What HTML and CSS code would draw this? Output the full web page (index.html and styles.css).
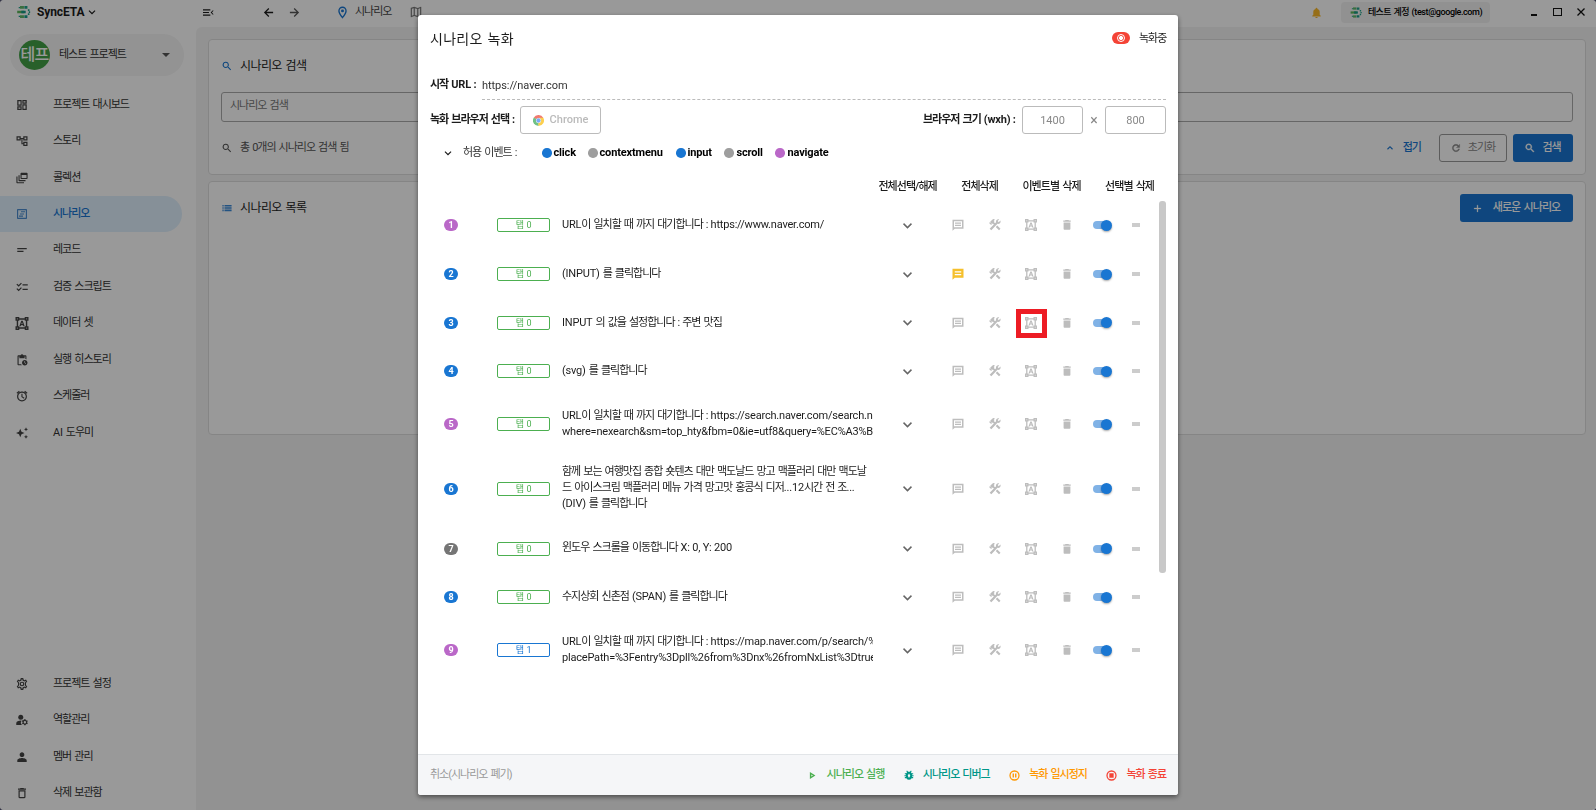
FILE: index.html
```html
<!DOCTYPE html>
<html lang="ko">
<head>
<meta charset="utf-8">
<title>SyncETA</title>
<link rel="stylesheet" href="styles.css">
</head>
<body>
<svg class="defs" aria-hidden="true">
  <symbol id="i-logo" viewBox="0 0 16 16"><path d="M4 1.200h4.500v3H4z" fill="#5fb868"/><path d="M9 1.200h3.500v3H9zM2.500 2.200H4v1.500H2.500z" fill="#1fa38a"/><path d="M.8 6.500h8v3H.8z" fill="#5cb85c"/><path d="M5.500 6.500h5v3h-5z" fill="#179a86"/><path d="M4 11.800h4.500v3H4z" fill="#5fb868"/><path d="M9 11.800h3.500v3H9zM2.500 12.300H4v1.500H2.500z" fill="#149c8c"/><path d="M13 4.800h1.800v2H13zM14 7.200h1.600v1.800H14zM13 9.500h1.800v2H13z" fill="#1fa38a"/></symbol>
  <symbol id="i-down" viewBox="0 0 24 24"><path d="M5.600 7.600 12 14l6.400-6.400L20.300 9.500 12 17.800 3.700 9.500z"/></symbol>
  <symbol id="i-up" viewBox="0 0 24 24"><path d="M12 7l-7 7 1.900 1.900L12 10.800l5.100 5.100L19 14z"/></symbol>
  <symbol id="i-menu" viewBox="0 0 24 24"><path d="M0 19h16v-2.500H0V19zm0-5.700h13v-2.500H0v2.500zM0 5v2.600h16V5zm23 10.590L19.420 12 23 8.410 21.590 7l-5 5 5 5L23 15.590z"/></symbol>
  <symbol id="i-back" viewBox="0 0 24 24"><path d="M20.500 10.700H8.200l5.200-5.200L11.800 3.800 3.500 12l8.300 8.200 1.600-1.700-5.200-5.200h12.300z"/></symbol>
  <symbol id="i-fwd" viewBox="0 0 24 24"><path d="M3.500 10.700h12.300l-5.200-5.200 1.600-1.700 8.300 8.200-8.300 8.200-1.600-1.700 5.200-5.200H3.500z"/></symbol>
  <symbol id="i-pin" viewBox="0 0 24 24"><path fill-rule="evenodd" d="M12 1C7.600 1 4.200 4.600 4.200 9c0 5.500 7.800 14 7.800 14s7.800-8.500 7.800-14c0-4.400-3.400-8-7.800-8zm0 2.500A5.400 5.400 0 0117.300 9c0 3-3 7.300-5.300 10.200C9.700 16.300 6.700 12 6.700 9A5.400 5.400 0 0112 3.500z"/><circle cx="12" cy="9" r="2.700"/></symbol>
  <symbol id="i-map" viewBox="0 0 24 24"><path d="M20.500 3l-.16.030L15 5.100 9 3 3.360 4.900c-.21.070-.36.250-.36.480V20.500c0 .28.220.5.500.5l.16-.03L9 18.900l6 2.100 5.640-1.900c.21-.07.36-.25.360-.48V3.500c0-.28-.22-.5-.5-.5zM10 5.470l4 1.400v11.660l-4-1.400V5.470zm-5 .99l3-1.010v11.700l-3 1.160V6.460zm14 11.080l-3 1.010V6.860l3-1.160v11.840z"/></symbol>
  <symbol id="i-bell" viewBox="0 0 24 24"><path d="M12 24c1.500 0 2.600-1 2.600-2.200H9.400C9.400 23 10.500 24 12 24zm7-7v-6c0-3.500-1.800-6-5-6.800V3.500c0-1-.9-1.800-2-1.800s-2 .8-2 1.800v.7C6.800 5 5 7.500 5 11v6l-2.200 2v1.500h18.400V19L19 17z"/></symbol>
  <symbol id="i-dash" viewBox="0 0 24 24"><path d="M19 4.500V7h-4V4.500h4M9 4.500V11H5V4.500h4M19 13v6.500h-4V13h4M9 17v2.500H5V17h4M21.500 2H12.700v7.500h8.800V2zM11.300 2H2.500v11.500h8.800V2zm10.200 8.500h-8.800V22h8.800V10.500zm-10.200 4H2.500V22h8.800v-7.500z"/></symbol>
  <symbol id="i-tree" viewBox="0 0 24 24"><path d="M23 11V2.500h-8.500V6H9.500V2.500H1V11h8.500V8h1.300v10.500h3.700V22H23v-8.500h-8.500v3H13V8h1.500v3H23zM7 8.700H3.400V5H7v3.700zm10 7.200h3.600v3.700H17v-3.700zM17 5h3.600v3.700H17V5z"/></symbol>
  <symbol id="i-coll" viewBox="0 0 24 24"><path d="M3 9H.8v11.500c0 1.100.9 2 2 2H16V20.300H3V9z"/><path d="M7.200 6.500H5v9.800c0 1.100.9 2 2 2h12v-2.200H7.200V6.500z"/><path fill-rule="evenodd" d="M21 1.500H11c-1.100 0-2 .9-2 2v8.700c0 1.100.9 2 2 2h10.200c1.100 0 2-.9 2-2V3.500c0-1.100-.9-2-2.200-2zm0 10.500h-9.800V6H21v6z"/></symbol>
  <symbol id="i-scen" viewBox="0 0 24 24"><path fill-rule="evenodd" d="M20 2H4c-1.100 0-2 .9-2 2v16c0 1.100.9 2 2 2h16c1.100 0 2-.9 2-2V4c0-1.100-.9-2-2-2zm-.3 17.700H4.300V4.300h15.400v15.400z"/><path d="M10 6.500h8v2.200h-8zM8 10.800h8V13H8zM6 15.200h8v2.200H6z"/></symbol>
  <symbol id="i-rec" viewBox="0 0 24 24"><path d="M2.500 8h19v2.600h-19V8zm0 5.500h12.500v2.600H2.500v-2.600z"/></symbol>
  <symbol id="i-check" viewBox="0 0 24 24"><path d="M23.500 6.500H13v2.400h10.500V6.500zm0 9H13v2.400h10.500v-2.400zM5.400 11.500L.8 7l1.700-1.700 2.900 2.900 4.600-4.700 1.700 1.700L5.400 11.500zm0 9L.8 16l1.700-1.700 2.900 2.900 4.600-4.700 1.700 1.700-6.300 6.300z"/></symbol>
  <symbol id="i-data" viewBox="0 0 24 24"><path fill-rule="evenodd" d="M0 0h7v2.300h10V0h7v7h-2.300v10H24v7h-7v-2.300H7V24H0v-7h2.300V7H0V0zm4.900 7v10H7v2.100h10V17h2.100V7H17V4.900H7V7z"/><path d="M10.700 6.800h2.600L17 17.200h-2.500l-.7-2.200h-3.600l-.7 2.200H7zm1.300 3L10.900 13h2.200z"/><path class="hole" d="M2.500 2.500h2v2h-2zM19.500 2.500h2v2h-2zM2.500 19.500h2v2h-2zM19.500 19.500h2v2h-2z"/></symbol>
  <symbol id="i-hist" viewBox="0 0 24 24"><path d="M17.500 12c-3 0-5.500 2.400-5.500 5.500s2.500 5.500 5.500 5.500 5.500-2.500 5.500-5.500-2.500-5.500-5.500-5.500zm1.600 8l-2.200-2.300V14h1.200v3.100l1.900 2-.9.900zM18.500 2.500h-3.500C14.400 1.300 13.300.5 12 .5s-2.400.8-3 2H5.200c-1.300 0-2.200.9-2.200 2V20.500c0 1.100.9 2.200 2.200 2.200h6.500c-.6-.7-1-1.500-1.300-2.300H5.300V4.800h1.500v3.500h10.400V4.800h1.500v5.400c.8.1 1.500.3 2.200.7V4.500c0-1.100-1-2-2.400-2z"/></symbol>
  <symbol id="i-alarm" viewBox="0 0 24 24"><path d="M23 5.700l-5-4.200-1.500 1.800 5 4.200L23 5.700zM7.500 3.300L6 1.500 1 5.700l1.500 1.800 5-4.200zM13 7.500h-2.200v6.700l5.100 3.100 1-1.700-3.900-2.400V7.500zM12 3c-5.500 0-9.900 4.400-9.900 9.900S6.500 22.800 12 22.800s9.900-4.400 9.900-9.900S17.500 3 12 3zm0 17.400c-4.200 0-7.500-3.300-7.500-7.500S7.800 5.400 12 5.400s7.500 3.300 7.500 7.500-3.300 7.500-7.500 7.500z"/></symbol>
  <symbol id="i-ai" viewBox="0 0 24 24"><path d="M20 8.500l1.250-2.750L24 4.500l-2.750-1.250L20 .5l-1.250 2.750L16 4.500l2.750 1.250zM20 15.500l-1.250 2.750L16 19.500l2.750 1.250L20 23.500l1.250-2.750L24 19.500l-2.750-1.250zM11 9.500L8.500 3.500 6 9.500 0 12l6 2.500 2.500 6 2.500-6 6-2.500z"/></symbol>
  <symbol id="i-gear" viewBox="0 0 24 24"><path fill-rule="evenodd" d="M9.500 0h5l.6 3.200 1.800 1.100 3.100-1.100 2.500 4.300-2.500 2.200v4.600l2.500 2.200-2.500 4.300-3.100-1.100-1.800 1.100-.6 3.200h-5l-.6-3.200-1.800-1.100L4 20.800l-2.500-4.300L4 14.300V9.700L1.500 7.500 4 3.200l3.100 1.100 1.800-1.100zm1.900 2.400L11 5 7.400 7 5 6.200l-.7 1.200 2 1.700v5.800l-2 1.700.7 1.200L7.400 17l3.600 2 .4 2.600h1.200L13 19l3.600-2 2.400.8.700-1.200-2-1.700V9.100l2-1.700-.7-1.200-2.400.8L13 5l-.4-2.600z"/><path fill-rule="evenodd" d="M12 7.300a4.700 4.700 0 100 9.400 4.700 4.700 0 000-9.400zm0 7a2.300 2.300 0 110-4.600 2.300 2.300 0 010 4.600z"/></symbol>
  <symbol id="i-role" viewBox="0 0 24 24"><circle cx="9.500" cy="6.500" r="5"/><path d="M10.600 13C4.500 13 .5 15.200.5 18.500V22h11.200A8 8 0 0110.600 13z"/><path fill-rule="evenodd" d="M16.500 10.500h2.600l.4 1.500 1.300.8 1.500-.5 1.300 2.200-1.100 1.100v1.800l1.100 1.100-1.300 2.200-1.500-.5-1.300.8-.4 1.500h-2.600l-.4-1.500-1.300-.8-1.500.5-1.300-2.200 1.100-1.100v-1.800L11 14.500l1.300-2.200 1.500.5 1.300-.8zm1.300 3.600a2.400 2.400 0 100 4.800 2.400 2.400 0 000-4.800z"/></symbol>
  <symbol id="i-user" viewBox="0 0 24 24"><path d="M12 12c2.600 0 4.700-2.100 4.700-4.700S14.600 2.600 12 2.600 7.300 4.700 7.300 7.300 9.400 12 12 12zm0 2.200c-3.200 0-9.400 1.500-9.400 4.700V22h18.800v-3.100c0-3.200-6.200-4.700-9.400-4.700z"/></symbol>
  <symbol id="i-trash-o" viewBox="0 0 24 24"><path fill-rule="evenodd" d="M5 20c0 1.300 1 2.300 2.300 2.300h9.400c1.300 0 2.300-1 2.300-2.300V6.500H5V20zM7.400 8.800h9.200v11H7.400v-11zM16 3l-1.100-1.200H9.100L8 3H4v2.300h16V3z"/></symbol>
  <symbol id="i-trash" viewBox="0 0 24 24"><path d="M5.200 19.500c0 1.200 1 2.200 2.200 2.200h9.200c1.200 0 2.200-1 2.200-2.200V7H5.200v12.500zM16 3l-1.100-1.200H9.100L8 3H4.500v2.700h15V3z"/></symbol>
  <symbol id="i-search" viewBox="0 0 24 24"><path fill-rule="evenodd" d="M16 14.300h-.9l-.3-.3A7.500 7.500 0 109 16.800c1.900 0 3.600-.7 4.900-1.800l.3.300v.9l5.800 5.700 1.800-1.800zm-7 0A5 5 0 119 4.300a5 5 0 010 10z"/></symbol>
  <symbol id="i-list" viewBox="0 0 24 24"><path d="M1 4.500h3V8.500H1zM1 10h3v4H1zM1 15.500h3v4H1zM6 4.500h17v4H6zM6 10h17v4H6zM6 15.500h17v4H6z" opacity=".85"/></symbol>
  <symbol id="i-refresh" viewBox="0 0 24 24"><path d="M18.200 5.800C16.600 4.200 14.500 3.200 12 3.200c-4.900 0-8.800 3.900-8.800 8.800s3.900 8.800 8.800 8.800c4.100 0 7.500-2.800 8.500-6.600h-2.800c-.9 2.400-3.100 4.100-5.700 4.100-3.500 0-6.300-2.800-6.300-6.300S8.500 5.700 12 5.700c1.700 0 3.300.7 4.400 1.900L13 11h7.800V3.200l-2.600 2.600z"/></symbol>
  <symbol id="i-plus" viewBox="0 0 24 24"><path d="M21 13.200h-7.800V21h-2.400v-7.800H3v-2.400h7.800V3h2.400v7.800H21z"/></symbol>
  <symbol id="i-msg" viewBox="0 0 24 24"><path fill-rule="evenodd" d="M1 1.500h22v18H5.500L1 23.500zM4 4.500v12h16v-12zM6 7h12v2.300H6zM6 11.500h12v2.300H6z"/></symbol>
  <symbol id="i-msg-f" viewBox="0 0 24 24"><path fill-rule="evenodd" d="M1 1.500h22v18H5.500L1 23.500zM5.500 6.500V9h13V6.500zM5.500 12v2.500h13V12z"/></symbol>
  <symbol id="i-tools" viewBox="0 0 24 24"><path d="M13.500 16l6.500 6.500 3-3-6.500-6.500zM18.500 9.800c2.600 0 4.700-2.100 4.700-4.700 0-.7-.2-1.300-.4-1.900l-3.300 3.300-2.300-2.300L20.500 1c-.6-.3-1.300-.4-2-.4-2.600 0-4.600 2.100-4.600 4.600 0 .5.1.9.2 1.300l-2 2-2-2 .8-.9-1.600-1.700L11.800 1.400a3.800 3.800 0 00-5.300 0L2.400 5.500 4 7.100H.9L.1 8l4.200 4.200.9-.9V8.200l1.600 1.700.9-.9 1.900 2L1.300 19.300l3.400 3.400L17 9.500c.5.200 1 .3 1.500.3z"/></symbol>
  <symbol id="i-play" viewBox="0 0 24 24"><path fill-rule="evenodd" d="M3 0v24l19-12zm5 8.500L13.500 12 8 15.500z"/></symbol>
  <symbol id="i-bug" viewBox="0 0 24 24"><path fill-rule="evenodd" d="M22 7.500h-3.500l-2-2.300L18.500 3 16.800 1.300l-2.900 2.600h-3.800L7.200 1.300 5.500 3l2 2.200-2 2.300H2V10h2.500v2.500H1v2.600h3.500V17H2v2.500h3.700A7.200 7.200 0 0012 23.500a7.200 7.200 0 006.300-4H22V17h-2.500v-1.900H23v-2.600h-3.500V10H22zM12 8.500l3 4.700-2 5h-2l-2-5z"/></symbol>
  <symbol id="i-pause" viewBox="0 0 24 24"><path fill-rule="evenodd" d="M12 .8a11.200 11.200 0 100 22.400A11.200 11.200 0 0012 .8zm0 2.800a8.400 8.400 0 110 16.800 8.400 8.400 0 010-16.800zM7.800 7.500v9h3v-9zm5.400 0v9h3v-9z"/></symbol>
  <symbol id="i-stop" viewBox="0 0 24 24"><path fill-rule="evenodd" d="M12 .8a11.200 11.200 0 100 22.400A11.200 11.200 0 0012 .8zm0 2.800a8.400 8.400 0 110 16.800 8.400 8.400 0 010-16.800zM7.300 7.300v9.400h9.400V7.300z"/></symbol>
  <symbol id="i-chrome" viewBox="0 0 24 24"><path fill="#ea4335" d="M12 12L1.600 6A12 12 0 0122.400 6z"/><path fill="#fbbc05" d="M12 12V6h10.400A12 12 0 0112 24z"/><path fill="#34a853" d="M12 12v12A12 12 0 011.600 6z"/><path fill="#34a853" d="M6.800 15L1.600 6l10.400 6z"/><path fill="#fbbc05" d="M17.200 15L12 24V12l5-4z"/><circle cx="12" cy="12" r="5.500" fill="#fff"/><circle cx="12" cy="12" r="4.700" fill="#4285f4"/></symbol>
</svg>

<div class="app">
  <header class="topbar">
    <svg class="ic logo"><use href="#i-logo"/></svg>
    <span class="brand">SyncETA</span>
    <svg class="ic brand-down"><use href="#i-down"/></svg>
    <svg class="ic menu"><use href="#i-menu"/></svg>
    <svg class="ic back"><use href="#i-back"/></svg>
    <svg class="ic fwd"><use href="#i-fwd"/></svg>
    <svg class="ic pin"><use href="#i-pin"/></svg>
    <span class="crumb">시나리오</span>
    <svg class="ic map"><use href="#i-map"/></svg>
    <svg class="ic bell"><use href="#i-bell"/></svg>
    <div class="account"><svg class="ic"><use href="#i-logo"/></svg><span>테스트 계정 <b class="en">(test@google.com)</b></span></div>
    <div class="win"><i class="min"></i><i class="max"></i><svg class="close" viewBox="0 0 10 10"><path d="M1.500 1.500l7 7M8.500 1.500l-7 7"/></svg></div>
  </header>
  <div class="body">
    <aside class="side">
      <div class="project"><span class="avatar">테프</span><span class="pname">테스트 프로젝트</span><i class="caret"></i></div>
      <nav class="nav">
        <a><svg><use href="#i-dash"/></svg>프로젝트 대시보드</a>
        <a><svg><use href="#i-tree"/></svg>스토리</a>
        <a><svg><use href="#i-coll"/></svg>콜렉션</a>
        <a class="on"><svg><use href="#i-scen"/></svg>시나리오</a>
        <a><svg><use href="#i-rec"/></svg>레코드</a>
        <a><svg><use href="#i-check"/></svg>검증 스크립트</a>
        <a><svg class="wide"><use href="#i-data"/></svg>데이터 셋</a>
        <a><svg><use href="#i-hist"/></svg>실행 히스토리</a>
        <a><svg><use href="#i-alarm"/></svg>스케줄러</a>
        <a><svg><use href="#i-ai"/></svg><span><span class="en">AI</span> 도우미</span></a>
      </nav>
      <nav class="nav foot">
        <a><svg><use href="#i-gear"/></svg>프로젝트 설정</a>
        <a><svg><use href="#i-role"/></svg>역할관리</a>
        <a><svg><use href="#i-user"/></svg>멤버 관리</a>
        <a><svg><use href="#i-trash-o"/></svg>삭제 보관함</a>
      </nav>
    </aside>
    <main class="content">
      <section class="card find">
        <h2><svg><use href="#i-search"/></svg>시나리오 검색</h2>
        <div class="field">시나리오 검색</div>
        <div class="result">
          <span class="count"><svg><use href="#i-search"/></svg>총 0개의 시나리오 검색 됨</span>
          <span class="fold"><svg><use href="#i-up"/></svg>접기</span>
          <span class="btn ghost"><svg><use href="#i-refresh"/></svg>초기화</span>
          <span class="btn go"><svg><use href="#i-search"/></svg>검색</span>
        </div>
      </section>
      <section class="card list">
        <h2><svg><use href="#i-list"/></svg>시나리오 목록</h2>
        <span class="btn new"><svg><use href="#i-plus"/></svg>새로운 시나리오</span>
      </section>
    </main>
  </div>
</div>

<div class="overlay">
  <div class="modal">
    <header class="mhead"><h1>시나리오 녹화</h1><span class="recbadge"><i></i></span><span class="recording">녹화중</span></header>
    <div class="url"><b>시작 <span class="en">URL :</span></b><div class="urlbox">https://naver.com</div></div>
    <div class="opts"><b>녹화 브라우저 선택 :</b><div class="chrome"><svg><use href="#i-chrome"/></svg>Chrome</div>
      <b class="size">브라우저 크기 <span class="en">(wxh) :</span></b><div class="num">1400</div><span class="x">×</span><div class="num">800</div></div>
    <div class="events"><svg><use href="#i-down"/></svg><span class="allow">허용 이벤트 :</span>
      <span class="ev click">click</span><span class="ev context">contextmenu</span><span class="ev input">input</span><span class="ev scroll">scroll</span><span class="ev navi">navigate</span></div>
    <div class="bulk"><span>전체선택/해제</span><span>전체삭제</span><span>이벤트별 삭제</span><span>선택별 삭제</span></div>

    <div class="steps">
      <div class="rows">
        <div class="row"><span class="no nv">1</span><span class="tag">탭 0</span><p><span class="en">URL</span>이 일치할 때 까지 대기합니다 : <span class="en">https://www.naver.com/</span></p><svg class="dn"><use href="#i-down"/></svg><svg><use href="#i-msg"/></svg><svg><use href="#i-tools"/></svg><svg><use href="#i-data"/></svg><svg><use href="#i-trash"/></svg><i class="sw"></i><i class="dash"></i></div>
        <div class="row"><span class="no">2</span><span class="tag">탭 0</span><p><span class="en">(INPUT)</span> 를 클릭합니다</p><svg class="dn"><use href="#i-down"/></svg><svg class="note"><use href="#i-msg-f"/></svg><svg><use href="#i-tools"/></svg><svg><use href="#i-data"/></svg><svg><use href="#i-trash"/></svg><i class="sw"></i><i class="dash"></i></div>
        <div class="row"><span class="no">3</span><span class="tag">탭 0</span><p><span class="en">INPUT</span> 의 값을 설정합니다 : 주변 맛집</p><svg class="dn"><use href="#i-down"/></svg><svg><use href="#i-msg"/></svg><svg><use href="#i-tools"/></svg><span class="marked"><svg><use href="#i-data"/></svg></span><svg><use href="#i-trash"/></svg><i class="sw"></i><i class="dash"></i></div>
        <div class="row"><span class="no">4</span><span class="tag">탭 0</span><p><span class="en">(svg)</span> 를 클릭합니다</p><svg class="dn"><use href="#i-down"/></svg><svg><use href="#i-msg"/></svg><svg><use href="#i-tools"/></svg><svg><use href="#i-data"/></svg><svg><use href="#i-trash"/></svg><i class="sw"></i><i class="dash"></i></div>
        <div class="row two"><span class="no nv">5</span><span class="tag">탭 0</span><p><span class="en">URL</span>이 일치할 때 까지 대기합니다 : <span class="en">https://search.naver.com/search.n</span><br><span class="en">where=nexearch&amp;sm=top_hty&amp;fbm=0&amp;ie=utf8&amp;query=%EC%A3%B</span></p><svg class="dn"><use href="#i-down"/></svg><svg><use href="#i-msg"/></svg><svg><use href="#i-tools"/></svg><svg><use href="#i-data"/></svg><svg><use href="#i-trash"/></svg><i class="sw"></i><i class="dash"></i></div>
        <div class="row three"><span class="no">6</span><span class="tag">탭 0</span><p>함께 보는 여행맛집 종합 숏텐츠 대만 맥도날드 망고 맥플러리 대만 맥도날<br>드 아이스크림 맥플러리 메뉴 가격 망고맛 홍콩식 디저<span class="en">...12</span>시간 전 조<span class="en">...</span><br><span class="en">(DIV)</span> 를 클릭합니다</p><svg class="dn"><use href="#i-down"/></svg><svg><use href="#i-msg"/></svg><svg><use href="#i-tools"/></svg><svg><use href="#i-data"/></svg><svg><use href="#i-trash"/></svg><i class="sw"></i><i class="dash"></i></div>
        <div class="row"><span class="no sc">7</span><span class="tag">탭 0</span><p>윈도우 스크롤을 이동합니다 <span class="en">X: 0, Y: 200</span></p><svg class="dn"><use href="#i-down"/></svg><svg><use href="#i-msg"/></svg><svg><use href="#i-tools"/></svg><svg><use href="#i-data"/></svg><svg><use href="#i-trash"/></svg><i class="sw"></i><i class="dash"></i></div>
        <div class="row"><span class="no">8</span><span class="tag">탭 0</span><p>수지상회 신촌점 <span class="en">(SPAN)</span> 를 클릭합니다</p><svg class="dn"><use href="#i-down"/></svg><svg><use href="#i-msg"/></svg><svg><use href="#i-tools"/></svg><svg><use href="#i-data"/></svg><svg><use href="#i-trash"/></svg><i class="sw"></i><i class="dash"></i></div>
        <div class="row two"><span class="no nv">9</span><span class="tag t1">탭 1</span><p><span class="en">URL</span>이 일치할 때 까지 대기합니다 : <span class="en">https://map.naver.com/p/search/%</span><br><span class="en">placePath=%3Fentry%3Dpll%26from%3Dnx%26fromNxList%3Dtrue</span></p><svg class="dn"><use href="#i-down"/></svg><svg><use href="#i-msg"/></svg><svg><use href="#i-tools"/></svg><svg><use href="#i-data"/></svg><svg><use href="#i-trash"/></svg><i class="sw"></i><i class="dash"></i></div>
      </div>
      <div class="scrollbar"></div>
    </div>

    <footer class="mfoot">
      <span class="cancel">취소(시나리오 폐기)</span>
      <span class="act run"><svg><use href="#i-play"/></svg>시나리오 실행</span>
      <span class="act debug"><svg><use href="#i-bug"/></svg>시나리오 디버그</span>
      <span class="act pause"><svg><use href="#i-pause"/></svg>녹화 일시정지</span>
      <span class="act stop"><svg><use href="#i-stop"/></svg>녹화 종료</span>
    </footer>
  </div>
</div>
</body>
</html>
```

FILE: styles.css
```css
* { box-sizing: border-box; }
html, body { margin: 0; height: 100%; overflow: hidden; background: #334; }
body {
  font-family: Roboto, "Noto Sans CJK KR", sans-serif;
  font-size: 11px;
  line-height: 16px;
  letter-spacing: -1px;
  word-spacing: 1.3px;
  color: #1c1c1c;
}
svg { fill: currentColor; display: block; flex: none; overflow: visible; }
h1, h2, p { margin: 0; font-weight: 400; }
i { display: block; flex: none; }
.defs { position: absolute; width: 0; height: 0; }
.hole { fill: #fff; opacity: .6; }
.en { letter-spacing: -0.2px; word-spacing: 0; }

.app { height: 810px; background: #fff; border-radius: 4px; display: flex; flex-direction: column; overflow: hidden; }

/* top bar */
.topbar { height: 27px; flex: none; display: flex; align-items: center; padding: 0 10px 3px 16px; white-space: nowrap; }
.ic { width: 14px; height: 14px; }
.logo { width: 15px; height: 14px; }
.brand { margin-left: 6px; width: 46px; font-size: 12px; font-weight: 700; letter-spacing: -0.1px; }
.brand-down { margin-left: 4px; width: 10px; height: 10px; }
.menu { width: 11px; height: 11px; margin-left: 106px; }
.back { width: 13px; height: 13px; margin-left: 48px; }
.fwd { width: 13px; height: 13px; margin-left: 13px; color: #555; }
.pin { width: 13px; height: 13px; margin-left: 35px; color: #1976d2; }
.crumb { margin-left: 6px; width: 37px; color: #444; }
.map { margin-left: 17px; color: #777; }
.bell { margin-left: 888px; margin-right: 19px; width: 11px; height: 11px; color: #fbb828; }
.account { width: 149px; height: 21px; border-radius: 4px; background: #f2f2f2; display: flex; align-items: center; padding-left: 9px; gap: 6px; font-size: 9px; font-weight: 500; letter-spacing: -0.7px; color: #000; }
.account .ic { width: 12px; height: 13px; }
.account b { font-weight: 500; letter-spacing: -0.4px; }
.win { display: flex; align-items: center; margin-left: auto; }
.min { width: 6px; height: 1.500px; background: #111; margin: 6px 16px 0 0; }
.max { width: 9px; height: 8px; border: 1px solid #111; margin-right: 14px; }
.close { width: 10px; height: 10px; stroke: #111; stroke-width: 1.300; }

.body { flex: 1; display: flex; min-height: 0; }

/* sidebar */
.side { width: 196px; display: flex; flex-direction: column; }
.project { margin: 7px 0 9px 10px; width: 174px; height: 42px; border-radius: 21px; background: #f5f5f5; display: flex; align-items: center; padding-left: 9px; }
.avatar { width: 31px; height: 30px; border-radius: 50%; background: #43a047; color: #fff; font-size: 16px; line-height: 29px; text-align: center; font-weight: 500; letter-spacing: -0.8px; }
.pname { margin-left: 9px; width: 103px; color: #333; }
.caret { border: 4px solid transparent; border-top-color: #555; border-bottom: 0; }
.nav { display: flex; flex-direction: column; padding-top: 1.500px; }
.nav a { height: 36.450px; width: 182px; display: flex; align-items: center; padding-left: 16px; color: #333; white-space: nowrap; border-radius: 0 18px 18px 0; }
.nav svg { width: 12px; height: 12px; margin-right: 25px; color: #444; }
.nav svg.wide { width: 14px; height: 13px; margin: 0 24px 0 -1px; }
.nav a.on { background: #dff0fd; color: #1976d2; font-weight: 500; }
.nav a.on svg { color: #4b8dd0; }
.nav.foot { margin-top: auto; margin-bottom: -1.500px; }

/* content */
.content { flex: 1; background: #f4f4f4; border-radius: 6px 0 0 0; padding: 12px 10px 0 12px; display: flex; flex-direction: column; gap: 6px; }
.card { border: 1px solid #dedede; border-radius: 4px; background: #fff; padding: 0 12px; }
.card h2 { font-size: 12px; letter-spacing: -0.6px; display: flex; align-items: center; color: #222; }
.card h2 svg { width: 10px; height: 10px; color: #1976d2; margin: 0 8px 0 1px; }
.find { height: 136px; padding-top: 18px; }
.field { height: 30px; margin-top: 18px; border: 1px solid #aaa; border-radius: 3px; padding: 5px 8px; color: #777; }
.result { display: flex; align-items: center; height: 28px; margin-top: 12px; }
.count { display: flex; align-items: center; color: #555; }
.count svg { width: 10px; height: 10px; margin: 0 8px 0 1px; }
.fold { margin-left: auto; display: flex; align-items: center; gap: 8px; color: #1976d2; font-weight: 500; margin-right: 18px; }
.fold svg { width: 10px; height: 10px; }
.btn { display: flex; align-items: center; justify-content: center; gap: 7px; height: 28px; border-radius: 3px; background: #1976d2; color: #fff; font-weight: 500; }
.btn svg { width: 10px; height: 10px; stroke: currentColor; stroke-width: .8; }
.ghost { width: 68px; background: none; border: 1px solid #999; color: #888; font-weight: 400; margin-right: 6px; }
.go { width: 60px; }
.list { height: 254px; padding-top: 12px; display: flex; justify-content: space-between; align-items: flex-start; }
.list h2 { height: 28px; }
.new { width: 113px; gap: 11px; letter-spacing: -0.9px; }
.new svg { width: 9px; height: 9px; }

/* dialog */
.overlay { position: fixed; inset: 0; background: rgba(0, 0, 0, .4); display: flex; justify-content: center; align-items: center; border-radius: 4px; }
.modal { width: 760px; height: 780px; background: #fff; border-radius: 3px; box-shadow: 0 2px 5px rgba(0, 0, 0, .5); display: flex; flex-direction: column; overflow: hidden; color: #1c1c1c; }
.modal > div, .modal > header { padding: 0 12px; }
.modal b { font-weight: 700; }
.mhead { height: 46px; display: flex; align-items: center; }
.mhead h1 { font-size: 14px; flex: 1; letter-spacing: 0.3px; word-spacing: 1px; padding-top: 1px; }
.recbadge { width: 18px; height: 12px; border-radius: 6px; background: #f44336; display: grid; place-items: center; margin-right: 9px; }
.recbadge i { width: 8px; height: 8px; border-radius: 50%; border: 1px solid #fff; background: radial-gradient(#fff 0 1.700px, transparent 2.300px); }
.recording { width: 27px; white-space: nowrap; padding-top: 2px; }
.url { display: flex; height: 39px; padding-top: 15px !important; }
.url > b { width: 52px; padding-top: 1px; white-space: nowrap; }
.urlbox { flex: 1; height: 24px; border-bottom: 1px dashed #bbb; letter-spacing: -0.05px; padding-top: 2px; color: #333; }
.opts { display: flex; align-items: center; margin-top: 6px; height: 28px; }
.opts > b { width: 90px; white-space: nowrap; }
.opts .size { margin-left: auto; width: 99px; }
.chrome { width: 81px; height: 28px; border: 1px solid #bbb; border-radius: 3px; display: flex; align-items: center; justify-content: center; gap: 6px; color: #bbb; letter-spacing: 0; font-weight: 500; }
.chrome svg { width: 11px; height: 11px; opacity: .7; }
.num { width: 61px; height: 28px; line-height: 27px; border: 1px solid #bbb; border-radius: 3px; text-align: center; color: #888; letter-spacing: 0; }
.x { width: 22px; text-align: center; color: #888; font-size: 14px; letter-spacing: 0; }
.events { display: flex; align-items: center; height: 38px; }
.events svg { width: 10px; height: 10px; margin: 0 10px 0 13px; }
.allow { width: 79px; color: #333; }
.ev { display: flex; align-items: center; font-weight: 700; letter-spacing: -0.15px; color: #000; white-space: nowrap; }
.ev::before { content: ""; width: 9.500px; height: 9.500px; border-radius: 50%; background: #1976d2; margin-right: 2px; }
.ev.click { width: 46px; } .ev.context { width: 88px; } .ev.input { width: 48px; } .ev.scroll { width: 51px; }
.ev.context::before, .ev.scroll::before { background: #9e9e9e; }
.ev.scroll::before { margin-right: 3px; }
.ev.navi::before { background: #ba68c8; margin-right: 3px; }
.bulk { height: 29px; display: flex; align-items: center; justify-content: flex-end; gap: 24.500px; padding-right: 24px !important; font-weight: 500; white-space: nowrap; letter-spacing: -0.95px; }
.steps { flex: 1; display: flex; justify-content: space-between; min-height: 0; }
.rows { width: 722px; }
.row { height: 48.700px; display: flex; align-items: center; color: #bdbdbd; padding-left: 14px; }
.row.two { height: 57px; } .row.three { height: 71.500px; }
.no { width: 14px; height: 12px; border-radius: 6px; background: #1976d2; color: #fff; font-weight: 700; font-size: 9px; line-height: 12px; text-align: center; letter-spacing: 0; margin-right: 39px; }
.no.nv { background: #ba68c8; } .no.sc { background: #757575; }
.tag { width: 53px; height: 14px; border: 1px solid #4caf50; border-radius: 2px; color: #4caf50; font-size: 9px; line-height: 13px; text-align: center; letter-spacing: -0.4px; word-spacing: 1px; margin-right: 12px; }
.tag.t1 { border-color: #1976d2; color: #1976d2; }
.row p { width: 311px; color: #1c1c1c; white-space: nowrap; overflow: hidden; margin: -0.4px 28px 0 0; }
.row svg { width: 12px; height: 12px; margin-right: 24.300px; }
.row .dn { width: 13px; height: 13px; color: #666; margin: 0 38.800px 0 -.500px; }
.row .note { color: #f5c02c; }
.marked { width: 31px; height: 29px; border: 5px solid #ed1c24; margin: 1px 14.300px 0 -9px; display: grid; place-items: center; }
.row .marked svg { margin: 0; }
.sw { width: 16px; height: 8px; border-radius: 4px; background: #80b2e6; position: relative; margin-left: -4.500px; }
.sw::after { content: ""; position: absolute; left: 8px; top: -1.500px; width: 11px; height: 11px; border-radius: 50%; background: #1976d2; box-shadow: 0 1px 2px rgba(0, 0, 0, .35); }
.dash { width: 8px; height: 4px; background: #ccc; margin-left: 23px; }
.scrollbar { width: 7px; height: 372px; border-radius: 3px; background: #c8c8c8; }
.mfoot { height: 41px; flex: none; border-top: 1px solid #e2e5e8; background: #f5f6f8; padding: 0 12px; display: flex; align-items: center; white-space: nowrap; }
.cancel { color: #999; margin-right: auto; }
.act { display: flex; align-items: center; gap: 9px; font-weight: 500; margin-left: 19.500px; }
.act svg { width: 11px; height: 11px; }
.run { color: #4caf50; } .debug { color: #009688; } .pause { color: #ff9800; } .stop { color: #f44336; }
.act.run svg { width: 7px; height: 7px; margin-right: 2px; }
.act.debug svg { width: 10px; height: 10px; }
```
